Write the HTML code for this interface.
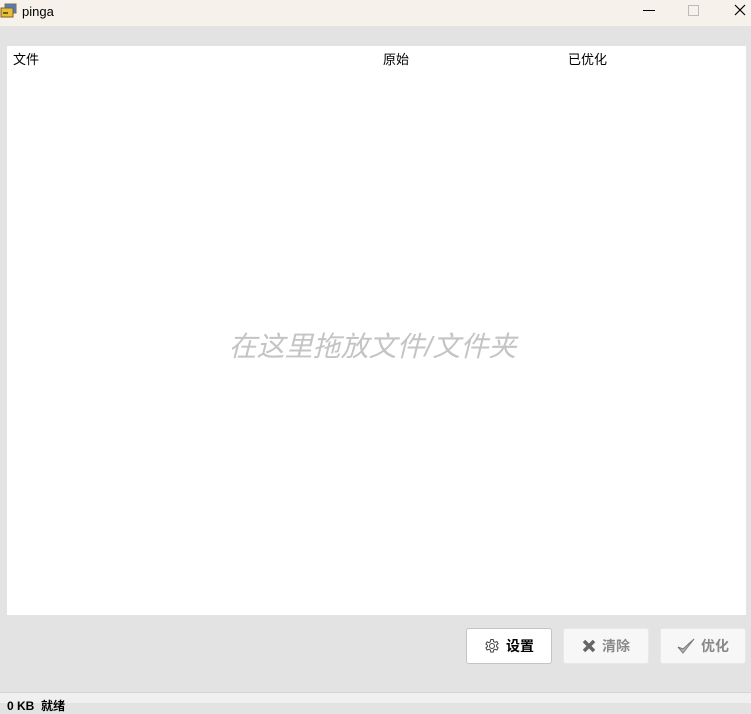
<!DOCTYPE html>
<html><head><meta charset="utf-8"><style>
body{margin:0;width:751px;height:702px;overflow:hidden;background:#e3e3e3;font-family:"Liberation Sans","Noto Sans CJK SC",sans-serif;position:relative}
.abs{position:absolute}
.title{left:0;top:0;width:751px;height:26px;background:#f6f1eb}
.panel{left:7px;top:46px;width:739px;height:569px;background:#fff}
.hdr{top:49px;font-size:13px;color:#000}
.drop{left:0;width:751px;top:325px;text-align:center;font-size:28px;font-style:italic;color:#c4c4c4;margin-left:-3px}
.btn{top:628px;width:86px;height:36px;box-sizing:border-box;border-radius:3px;display:flex;align-items:center;justify-content:center;font-size:14px;font-weight:bold;gap:6px}
.status{left:0;top:692px;width:751px;height:10px;background:#f0f0f0;border-top:1px solid #d6d6d6}
</style></head><body>
<div class="abs title"></div>
<svg class="abs" style="left:0;top:3px" width="18" height="16" viewBox="0 0 18 16"><rect x="5" y="1" width="11" height="9" fill="#4a7fd0" stroke="#8a6a3a"/><rect x="1" y="5" width="12" height="9" fill="#e3c23a" stroke="#8a5a20"/><rect x="3" y="9" width="5" height="2" fill="#7a5a10"/></svg>
<div class="abs" style="left:22px;top:4px;font-size:13px">pinga</div>
<div class="abs" style="left:643px;top:10px;width:12px;height:1px;background:#000"></div>
<div class="abs" style="left:688px;top:5px;width:9px;height:9px;border:1px solid #bbb"></div>
<svg class="abs" style="left:734px;top:4px" width="12" height="12"><path d="M1 1L11 11M11 1L1 11" stroke="#000" stroke-width="1.2"/></svg>
<div class="abs panel"></div>
<div class="abs hdr" style="left:13px">文件</div>
<div class="abs hdr" style="left:383px">原始</div>
<div class="abs hdr" style="left:568px">已优化</div>
<div class="abs drop">在这里拖放文件/文件夹</div>
<div class="abs btn" style="left:466px;background:#fff;border:1px solid #c4c4c4;color:#000">
<svg width="16" height="16" viewBox="0 0 16 16"><g fill="none" stroke="#444" stroke-width="1"><circle cx="8" cy="8" r="2.5"/><path d="M6.8 1.5h2.4l.4 2 1.4.8 1.9-.7 1.2 2.1-1.5 1.3v1.6l1.5 1.3-1.2 2.1-1.9-.7-1.4.8-.4 2H6.8l-.4-2-1.4-.8-1.9.7-1.2-2.1 1.5-1.3V7.3L1.9 6l1.2-2.1 1.9.7 1.4-.8z"/></g></svg>设置</div>
<div class="abs btn" style="left:563px;background:#f7f7f7;border:1px solid #e8e8e8;color:#888">
<svg width="14" height="14" viewBox="0 0 14 14"><path d="M2 2L12 12M12 2L2 12" stroke="#666" stroke-width="3.5"/></svg>清除</div>
<div class="abs btn" style="left:660px;background:#f7f7f7;border:1px solid #e8e8e8;color:#888">
<svg width="18" height="16" viewBox="0 0 18 16"><path d="M1 9l5 6L17 1 6 11z" fill="#bbb" stroke="#777" stroke-width="1"/></svg>优化</div>
<div class="abs status"></div>
<div class="abs" style="left:7px;top:697px;font-size:12px;font-weight:bold">0 KB &nbsp;就绪</div>
</body></html>
